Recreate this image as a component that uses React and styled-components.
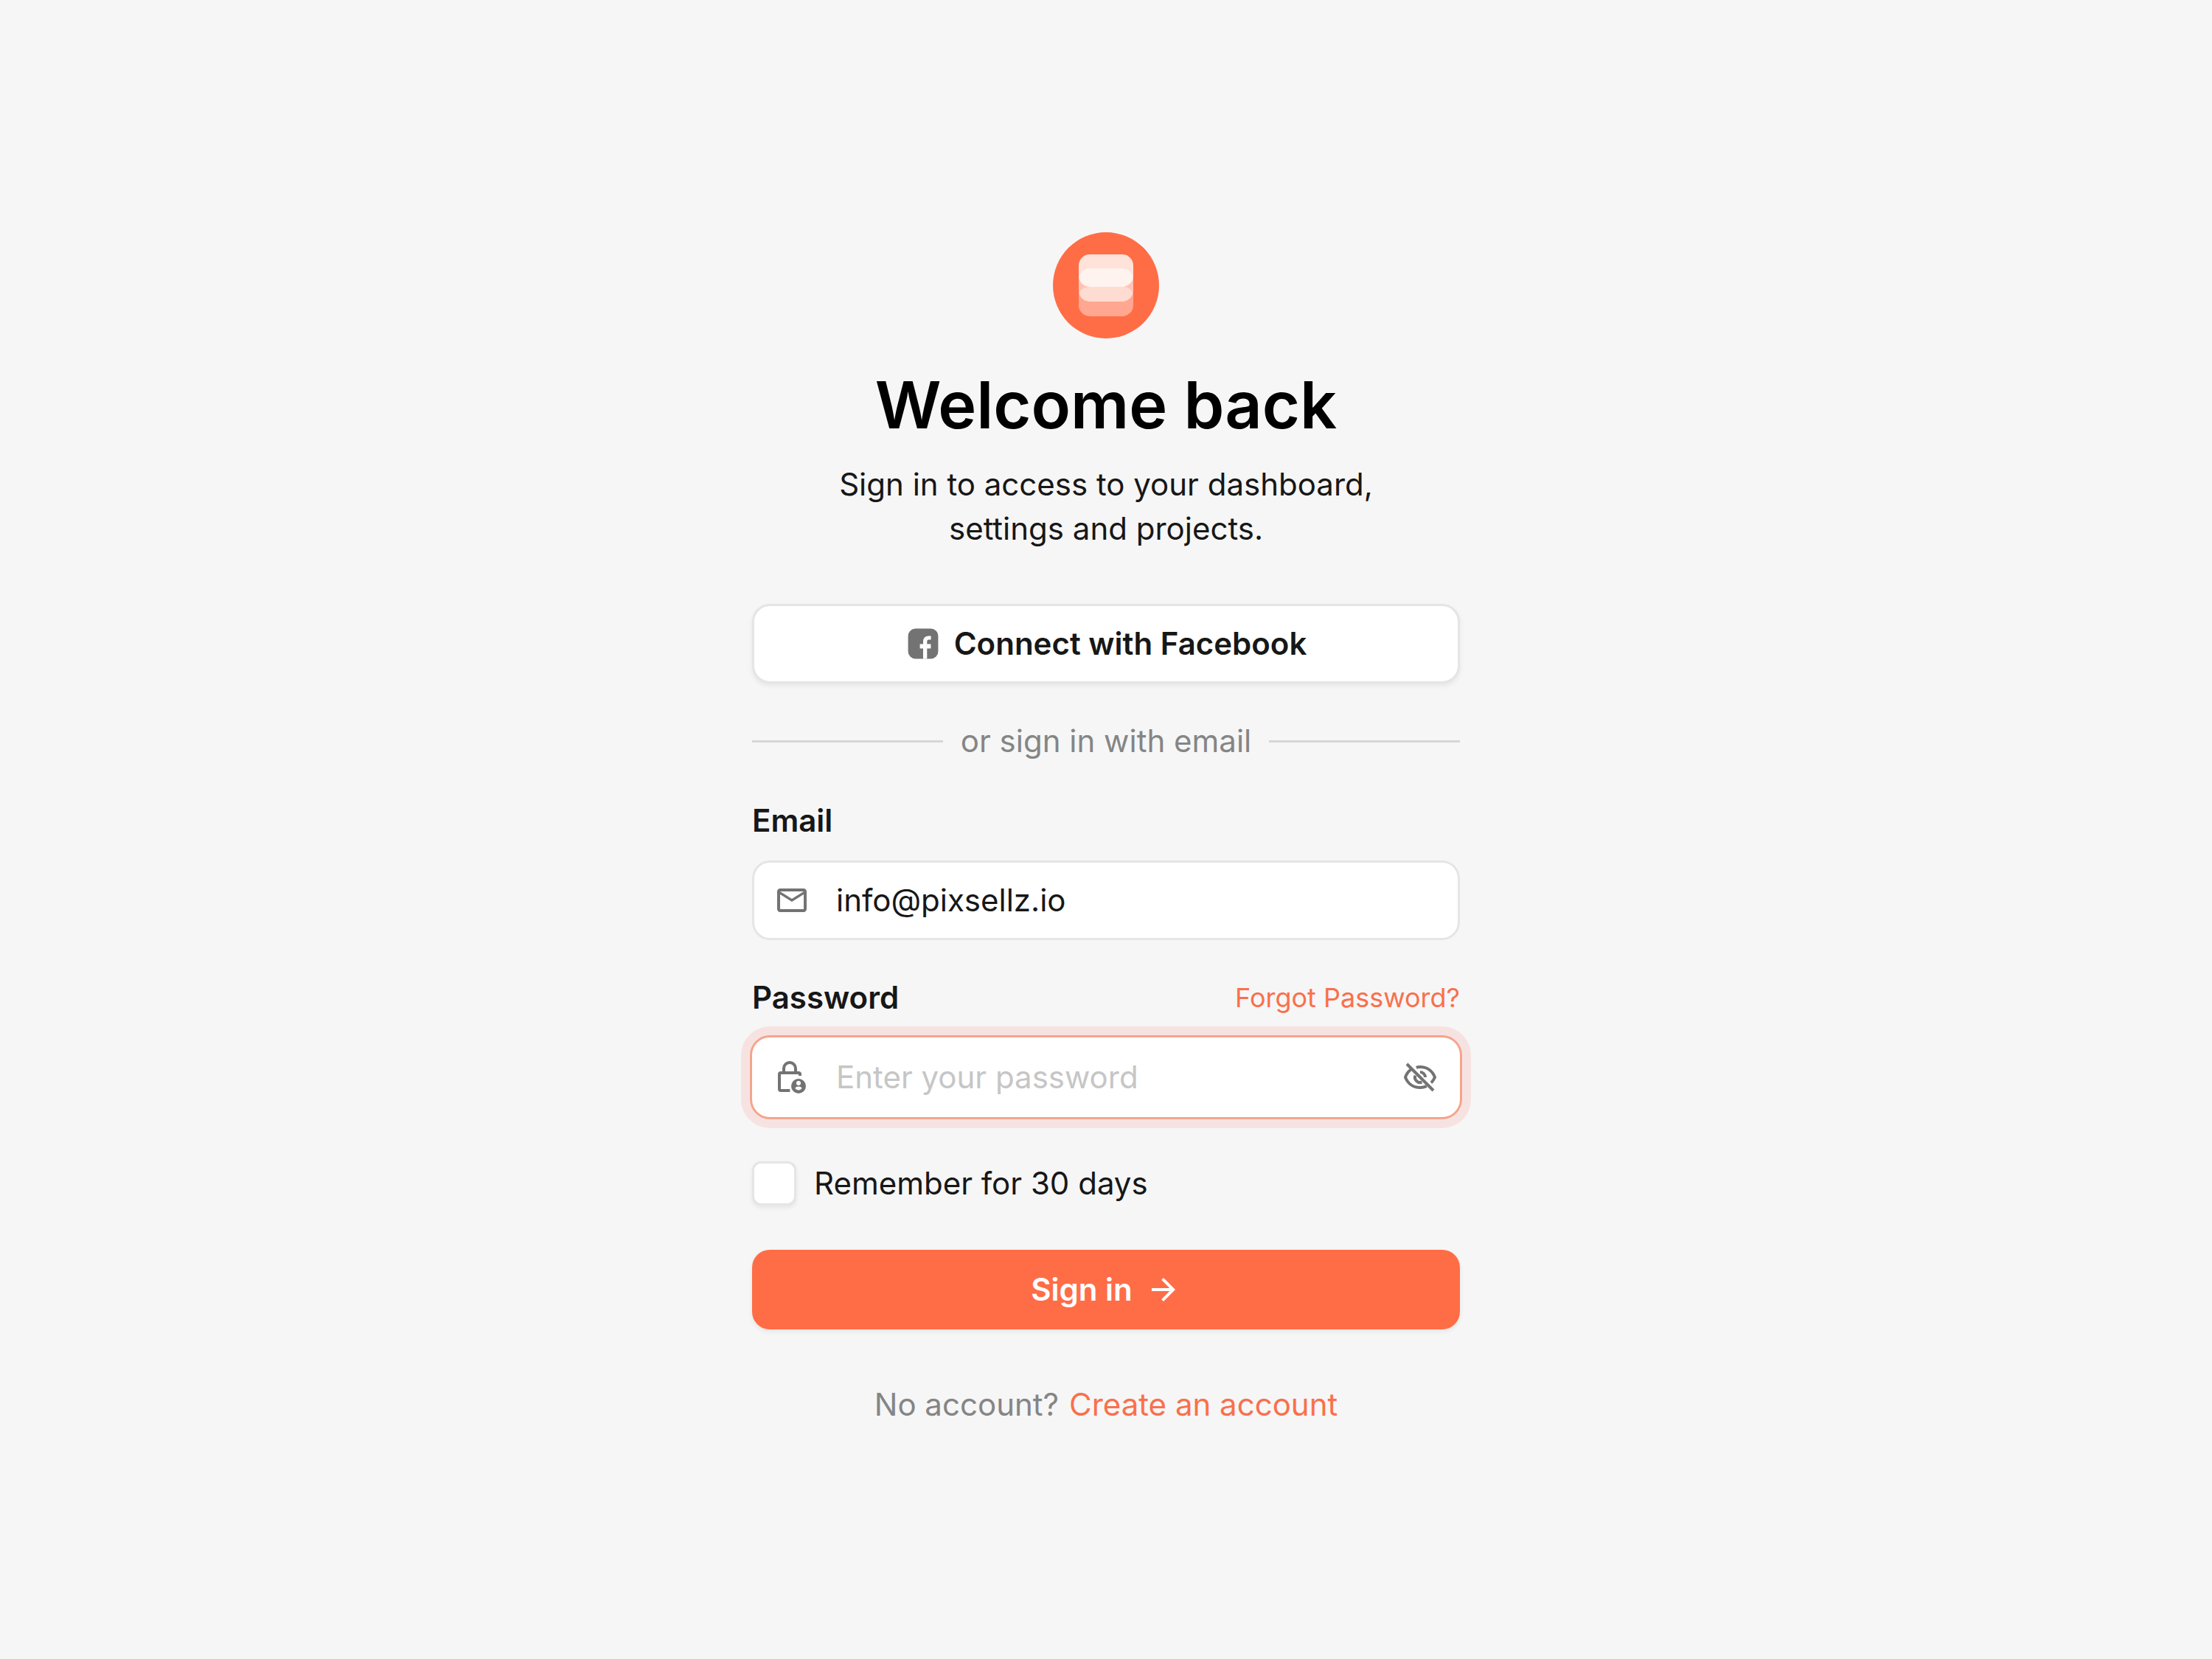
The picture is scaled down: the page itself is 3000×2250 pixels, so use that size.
import React, { useState } from "react";
import styled, { createGlobalStyle, css } from "styled-components";

const color = {
  page: "#f6f6f6",
  brand: "#ff6d47",
  link: "#f9704c",
  ink: "#171717",
  muted: "#858585",
  icon: "#737373",
  placeholder: "#c6c6c6",
  line: "#d6d6d6",
  border: "#e5e5e5",
};

const GlobalStyle = createGlobalStyle`
  *, *::before, *::after { box-sizing: border-box; }
  body {
    margin: 0;
    background: ${color.page};
    color: ${color.ink};
    font-family: Inter, "Liberation Sans", sans-serif;
    font-size: 42px;
    line-height: 60px;
  }
`;

const Page = styled.main`
  min-height: 100vh;
  display: flex;
  align-items: center;
  justify-content: center;
  padding: 48px;
`;

const Panel = styled.div`
  width: 100%;
  max-width: 960px;
  display: flex;
  flex-direction: column;
`;

const Header = styled.header`
  display: flex;
  flex-direction: column;
  align-items: center;
  text-align: center;
  margin-bottom: 72px;
`;

const Logo = styled.svg`
  width: 144px;
  height: 144px;
  margin-bottom: 36px;
`;

const Title = styled.h1`
  margin: 0 0 24px;
  color: #000;
  font-size: 88px;
  line-height: 108px;
  font-weight: 600;
`;

const Subtitle = styled.p`
  margin: 0;
  max-width: 780px;
`;

const buttonBase = css`
  display: flex;
  align-items: center;
  justify-content: center;
  gap: 18px;
  width: 100%;
  height: 108px;
  border-radius: 24px;
  font: inherit;
  font-weight: 600;
  box-shadow: 0 3px 6px rgba(0, 0, 0, 0.07);
  cursor: pointer;
`;

const SocialButton = styled.button`
  ${buttonBase}
  border: 3px solid ${color.border};
  background: #fff;
  color: ${color.ink};
`;

const SubmitButton = styled.button`
  ${buttonBase}
  border: 0;
  background: ${color.brand};
  color: #fff;
`;

const Icon = styled.svg`
  flex: none;
  display: block;
  width: 48px;
  height: 48px;
`;

const Divider = styled.div`
  display: flex;
  align-items: center;
  gap: 24px;
  margin: 48px 0;
  color: ${color.muted};

  &::before,
  &::after {
    content: "";
    flex: 1;
    height: 3px;
    background: ${color.line};
  }
`;

const Form = styled.form`
  display: flex;
  flex-direction: column;
`;

const Field = styled.div`
  display: flex;
  flex-direction: column;
  gap: 24px;
  margin-bottom: ${(p) => (p.$last ? "60px" : "48px")};
`;

const LabelRow = styled.div`
  display: flex;
  align-items: center;
  justify-content: space-between;
`;

const Label = styled.label`
  font-weight: 600;
`;

const Link = styled.a`
  color: ${color.link};
  font-size: ${(p) => (p.$small ? "36px" : "inherit")};
  text-decoration: none;
`;

const InputBox = styled.div`
  display: flex;
  align-items: center;
  gap: 36px;
  height: 108px;
  padding: 0 30px;
  border-radius: 24px;
  background: #fff;
  color: ${color.icon};
  box-shadow: ${(p) =>
    p.$active
      ? "0 0 0 3px #f5a48c, 0 0 0 15px #f6e3e1"
      : `inset 0 0 0 3px ${color.border}`};
`;

const Input = styled.input`
  flex: 1;
  min-width: 0;
  height: 60px;
  padding: 0;
  border: 0;
  outline: 0;
  background: transparent;
  color: ${color.ink};
  font: inherit;

  &::placeholder {
    color: ${color.placeholder};
    opacity: 1;
  }
`;

const IconButton = styled.button`
  flex: none;
  padding: 0;
  border: 0;
  background: none;
  color: inherit;
  cursor: pointer;
`;

const Remember = styled.label`
  display: flex;
  align-items: center;
  gap: 24px;
  margin-bottom: 60px;
`;

const Checkbox = styled.input`
  appearance: none;
  flex: none;
  width: 60px;
  height: 60px;
  margin: 0;
  border: 3px solid ${color.border};
  border-radius: 12px;
  background: #fff;
  box-shadow: 0 3px 6px rgba(0, 0, 0, 0.07);

  &:checked {
    border-color: ${color.brand};
    background: ${color.brand};
  }
`;

const Footer = styled.p`
  display: flex;
  justify-content: center;
  gap: 14px;
  margin: 72px 0 0;
  color: ${color.muted};
`;

const BrandLogo = () => (
  <Logo viewBox="0 0 144 144" aria-hidden="true">
    <circle cx="72" cy="72" r="72" fill={color.brand} />
    <path
      d="M35 84a15 12 0 0 1 15-10h44a15 12 0 0 1 15 10v15a15 15 0 0 1-15 15H50a15 15 0 0 1-15-15z"
      fill="#fff"
      fillOpacity="0.4"
    />
    <rect x="35" y="49" width="74" height="45" rx="15" fill="#fff" fillOpacity="0.6" />
    <rect x="35" y="30" width="74" height="44" rx="15" fill="#fff" fillOpacity="0.8" />
  </Logo>
);

const FacebookIcon = () => (
  <Icon viewBox="0 0 24 24" aria-hidden="true">
    <rect x="1.800" y="1.800" width="20.400" height="20.400" rx="5" fill={color.icon} />
    <path
      d="M12 22.200v-7H9.800v-3H12v-1.700c0-2.400 1.500-3.800 3.700-3.800h1.600v2.600h-1.400c-.8 0-1.250.45-1.250 1.200v1.700h2.550v3h-2.550v7z"
      fill="#fff"
    />
  </Icon>
);

const MailIcon = () => (
  <Icon viewBox="0 0 24 24" fill="currentColor" aria-hidden="true">
    <path d="M22 6c0-1.100-.9-2-2-2H4c-1.100 0-2 .9-2 2v12c0 1.100.9 2 2 2h16c1.100 0 2-.9 2-2V6zm-2 0-8 5-8-5h16zm0 12H4V8l8 5 8-5v10z" />
  </Icon>
);

const LockIcon = () => (
  <Icon viewBox="0 0 24 24" fill="none" aria-hidden="true">
    <path
      d="M6.500 9V6a4 4 0 0 1 8 0v3M17.500 11v-1a1 1 0 0 0-1-1h-12a1 1 0 0 0-1 1v10a1 1 0 0 0 1 1h6.200"
      stroke="currentColor"
      strokeWidth="2"
    />
    <circle cx="16.500" cy="18" r="5" fill="currentColor" />
    <circle cx="16.500" cy="16" r="1.500" fill="#fff" />
    <path d="M14.200 19.500c.5-.8 1.400-1.200 2.300-1.200s1.800.4 2.300 1.200c-.5.8-1.400 1.200-2.300 1.200s-1.800-.4-2.300-1.200z" fill="#fff" />
  </Icon>
);

const EyeOffIcon = () => (
  <Icon viewBox="0 0 24 24" fill="none" stroke="currentColor" strokeWidth="2" aria-hidden="true">
    <path d="M9.400 5.400C10.200 5.100 11.100 5 12 5c4.500 0 8.300 2.600 10 7-.6 1.400-1.400 2.700-2.500 3.700M6 6.600C4.200 7.900 2.800 9.700 2 12c1.700 4.400 5.500 7 10 7 1.600 0 3-.3 4.400-.9" />
    <path d="M12 8.500a3.500 3.500 0 0 1 3.500 3.500M8.700 10.800A3.500 3.500 0 0 0 13.200 15.300" />
    <path d="M3 3l18 18" />
  </Icon>
);

const ArrowIcon = () => (
  <Icon viewBox="0 0 24 24" fill="currentColor" aria-hidden="true">
    <path d="m12 4-1.410 1.410L16.170 11H4v2h12.170l-5.580 5.590L12 20l8-8z" />
  </Icon>
);

export default function App() {
  const [visible, setVisible] = useState(false);

  return (
    <>
      <GlobalStyle />
      <Page>
        <Panel>
          <Header>
            <BrandLogo />
            <Title>Welcome back</Title>
            <Subtitle>Sign in to access to your dashboard, settings and projects.</Subtitle>
          </Header>
          <SocialButton type="button">
            <FacebookIcon />
            Connect with Facebook
          </SocialButton>
          <Divider>or sign in with email</Divider>
          <Form onSubmit={(e) => e.preventDefault()}>
            <Field>
              <Label htmlFor="email">Email</Label>
              <InputBox>
                <MailIcon />
                <Input id="email" type="email" defaultValue="info@pixsellz.io" />
              </InputBox>
            </Field>
            <Field $last>
              <LabelRow>
                <Label htmlFor="password">Password</Label>
                <Link href="#forgot" $small>Forgot Password?</Link>
              </LabelRow>
              <InputBox $active>
                <LockIcon />
                <Input
                  id="password"
                  type={visible ? "text" : "password"}
                  placeholder="Enter your password"
                />
                <IconButton
                  type="button"
                  aria-label="Toggle password visibility"
                  onClick={() => setVisible(!visible)}
                >
                  <EyeOffIcon />
                </IconButton>
              </InputBox>
            </Field>
            <Remember htmlFor="remember">
              <Checkbox id="remember" type="checkbox" />
              Remember for 30 days
            </Remember>
            <SubmitButton type="submit">
              Sign in
              <ArrowIcon />
            </SubmitButton>
          </Form>
          <Footer>
            No account?
            <Link href="#create">Create an account</Link>
          </Footer>
        </Panel>
      </Page>
    </>
  );
}
